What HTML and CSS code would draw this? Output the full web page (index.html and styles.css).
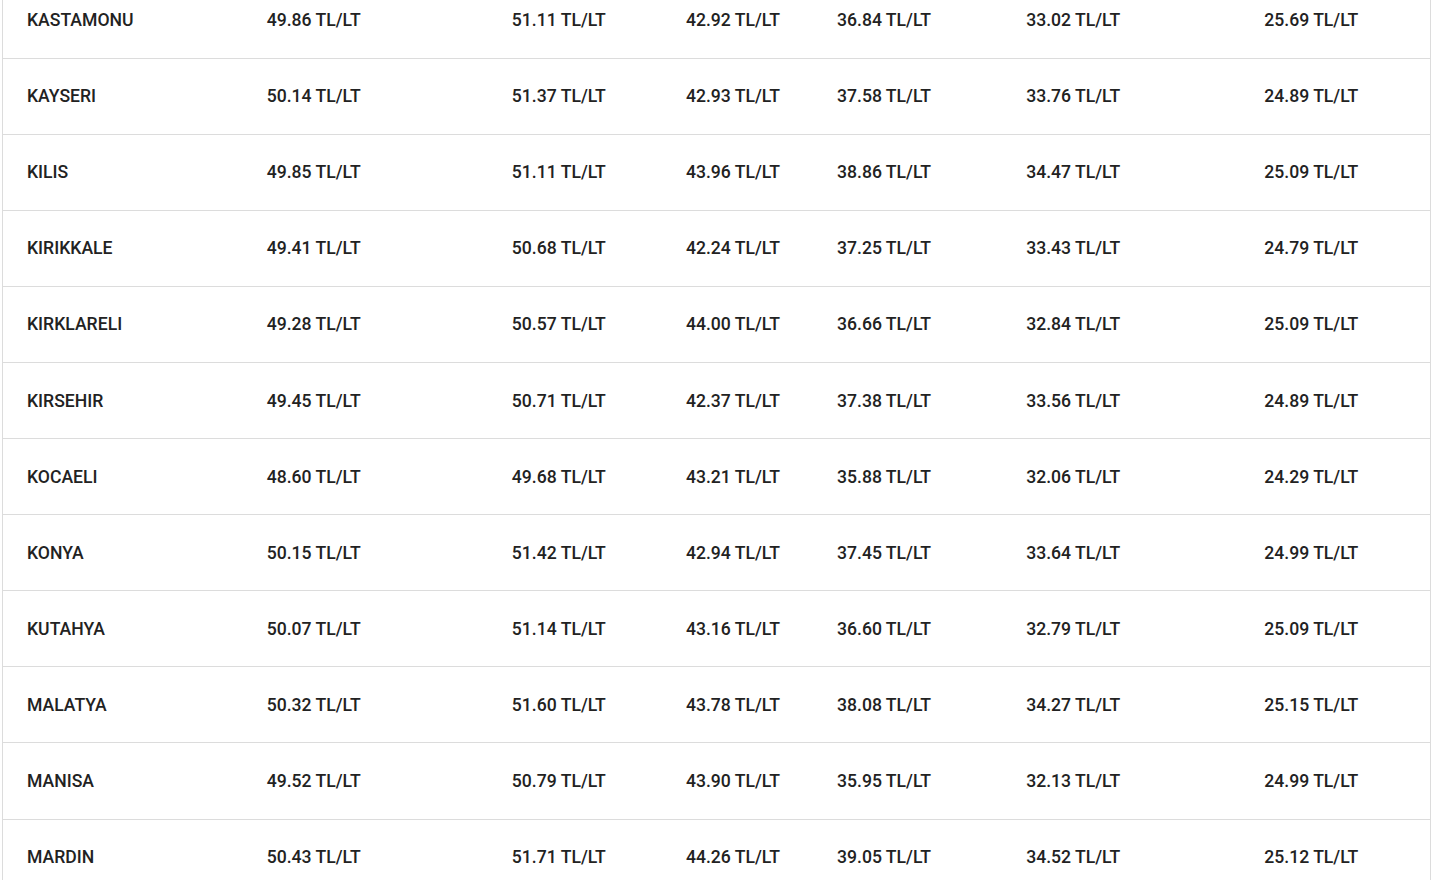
FILE: index.html
```html
<!DOCTYPE html>
<html lang="tr">
<head>
<meta charset="utf-8">
<title>Akaryakıt Fiyatları</title>
<link rel="stylesheet" href="styles.css">
</head>
<body>
<div class="wrap">
<table class="prices">
<colgroup>
<col class="c1"><col class="c2"><col class="c3"><col class="c4"><col class="c5"><col class="c6"><col class="c7">
</colgroup>
<tbody>
<tr><td>KASTAMONU</td><td>49.86 TL/LT</td><td>51.11 TL/LT</td><td>42.92 TL/LT</td><td>36.84 TL/LT</td><td>33.02 TL/LT</td><td>25.69 TL/LT</td></tr>
<tr><td>KAYSERI</td><td>50.14 TL/LT</td><td>51.37 TL/LT</td><td>42.93 TL/LT</td><td>37.58 TL/LT</td><td>33.76 TL/LT</td><td>24.89 TL/LT</td></tr>
<tr><td>KILIS</td><td>49.85 TL/LT</td><td>51.11 TL/LT</td><td>43.96 TL/LT</td><td>38.86 TL/LT</td><td>34.47 TL/LT</td><td>25.09 TL/LT</td></tr>
<tr><td>KIRIKKALE</td><td>49.41 TL/LT</td><td>50.68 TL/LT</td><td>42.24 TL/LT</td><td>37.25 TL/LT</td><td>33.43 TL/LT</td><td>24.79 TL/LT</td></tr>
<tr><td>KIRKLARELI</td><td>49.28 TL/LT</td><td>50.57 TL/LT</td><td>44.00 TL/LT</td><td>36.66 TL/LT</td><td>32.84 TL/LT</td><td>25.09 TL/LT</td></tr>
<tr><td>KIRSEHIR</td><td>49.45 TL/LT</td><td>50.71 TL/LT</td><td>42.37 TL/LT</td><td>37.38 TL/LT</td><td>33.56 TL/LT</td><td>24.89 TL/LT</td></tr>
<tr><td>KOCAELI</td><td>48.60 TL/LT</td><td>49.68 TL/LT</td><td>43.21 TL/LT</td><td>35.88 TL/LT</td><td>32.06 TL/LT</td><td>24.29 TL/LT</td></tr>
<tr><td>KONYA</td><td>50.15 TL/LT</td><td>51.42 TL/LT</td><td>42.94 TL/LT</td><td>37.45 TL/LT</td><td>33.64 TL/LT</td><td>24.99 TL/LT</td></tr>
<tr><td>KUTAHYA</td><td>50.07 TL/LT</td><td>51.14 TL/LT</td><td>43.16 TL/LT</td><td>36.60 TL/LT</td><td>32.79 TL/LT</td><td>25.09 TL/LT</td></tr>
<tr><td>MALATYA</td><td>50.32 TL/LT</td><td>51.60 TL/LT</td><td>43.78 TL/LT</td><td>38.08 TL/LT</td><td>34.27 TL/LT</td><td>25.15 TL/LT</td></tr>
<tr><td>MANISA</td><td>49.52 TL/LT</td><td>50.79 TL/LT</td><td>43.90 TL/LT</td><td>35.95 TL/LT</td><td>32.13 TL/LT</td><td>24.99 TL/LT</td></tr>
<tr><td>MARDIN</td><td>50.43 TL/LT</td><td>51.71 TL/LT</td><td>44.26 TL/LT</td><td>39.05 TL/LT</td><td>34.52 TL/LT</td><td>25.12 TL/LT</td></tr>
</tbody>
</table>
</div>
</body>
</html>
```
FILE: styles.css
```css
html, body {
  margin: 0;
  padding: 0;
  background: #fff;
  overflow: hidden;
}
.wrap {
  padding: 0 3px 0 2px;
  margin-top: -18px;
}
.prices {
  width: 1429px;
  border-collapse: collapse;
  table-layout: fixed;
  border-left: 1px solid #dcdcdc;
  border-right: 1px solid #dcdcdc;
  font-family: Roboto, "Liberation Sans", sans-serif;
  font-weight: 500;
  font-size: 17.6px;
  color: #222;
}
.c1 { width: 240px; }
.c2 { width: 245px; }
.c3 { width: 174px; }
.c4 { width: 151px; }
.c5 { width: 189px; }
.c6 { width: 238px; }
.c7 { width: 190px; }
.prices td {
  height: 76.1px;
  padding: 0 0 0 24px;
  border-bottom: 1px solid #dcdcdc;
  vertical-align: middle;
  text-align: left;
  white-space: nowrap;
  box-sizing: border-box;
}
```
